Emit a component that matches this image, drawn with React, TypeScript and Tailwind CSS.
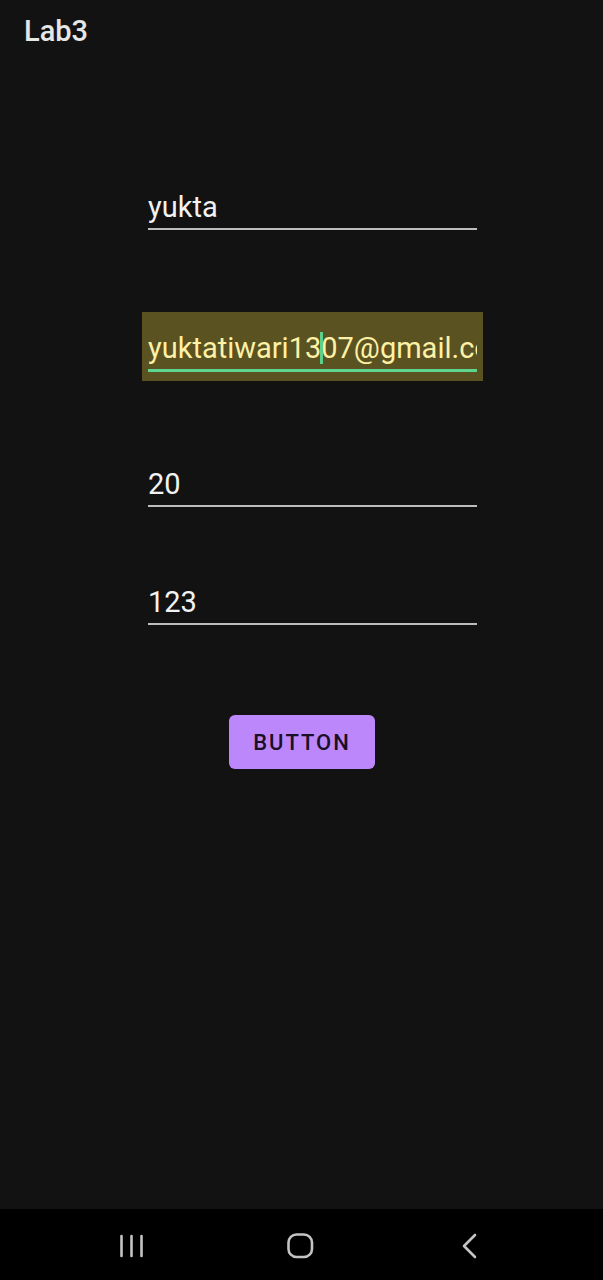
import React from "react";

const font = { fontFamily: "Roboto, 'Noto Sans', sans-serif" };

function Field({ value, className = "" }: { value: string; className?: string }) {
  return (
    <div className={`w-[341px] h-[69px] px-[6px] pt-[20px] ${className}`}>
      <div className="text-[29px] leading-[32px] text-[#f2f2f2] whitespace-nowrap overflow-hidden">{value}</div>
      <div className="mt-[5px] h-[2px] bg-[#bdbdbd]" />
    </div>
  );
}

export default function App() {
  return (
    <div className="w-[603px] h-[1280px] bg-[#121212] flex flex-col" style={font}>
      <div className="h-[62px] px-[24px] pt-[13px]">
        <div className="text-[29px] leading-[36px] font-medium text-[#e6e6e6]">Lab3</div>
      </div>
      <div className="flex-1 flex flex-col items-start pl-[142px]">
        <Field value="yukta" className="mt-[109px]" />
        <div className="w-[341px] h-[69px] px-[6px] pt-[20px] mt-[72px] bg-[#5a5221]">
          <div className="relative text-[29px] leading-[32px] text-[#fdf1a6] whitespace-nowrap overflow-hidden">
            yuktatiwari13<span className="relative">
              <span className="absolute left-[-1px] top-[-6px] w-[2.5px] h-[41px] bg-[#5cd08a]" />
            </span>07@gmail.com
          </div>
          <div className="mt-[5px] h-[3px] bg-[#5fd690]" />
        </div>
        <Field value="20" className="mt-[67px]" />
        <Field value="123" className="mt-[49px]" />
        <button className="mt-[80px] ml-[87px] w-[146px] h-[54px] rounded-[6px] bg-[#bd87fc] text-[#1a0f26] text-[22px] font-medium tracking-[2px] flex items-center justify-center">
          BUTTON
        </button>
      </div>
      <div className="h-[71px] bg-black flex items-center justify-between">
        <svg width="603" height="71" viewBox="0 0 603 71">
          <g stroke="#c4c4c4" strokeWidth="2.6" strokeLinecap="round" fill="none">
            <line x1="121.5" y1="27" x2="121.5" y2="47" />
            <line x1="131.5" y1="27" x2="131.5" y2="47" />
            <line x1="141.5" y1="27" x2="141.5" y2="47" />
            <rect x="288.5" y="25.5" width="23.5" height="22.5" rx="8" />
            <polyline points="475,26 464,37 475,48" strokeLinejoin="round" />
          </g>
        </svg>
      </div>
    </div>
  );
}
